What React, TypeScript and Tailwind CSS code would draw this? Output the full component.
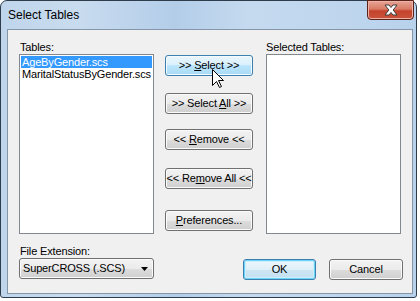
import React from "react";

const font = { fontFamily: '"Liberation Sans", Arial, sans-serif' };

type V = "normal" | "hover" | "default";

function Btn({
  children,
  v = "normal",
  className = "",
}: {
  children: React.ReactNode;
  v?: V;
  className?: string;
}) {
  const base =
    "flex items-center justify-center overflow-hidden whitespace-pre rounded-[3px] border text-[11px] leading-[13px] text-black";
  const style =
    v === "hover"
      ? "border-[#3c7fb1] bg-[linear-gradient(to_bottom,#eaf6fd_0%,#d9f0fc_50%,#bee6fd_50%,#a7d9f5_100%)] shadow-[inset_0_0_0_1px_#f4fbfe]"
      : v === "default"
      ? "border-[#3c7fb1] bg-[linear-gradient(to_bottom,#eef7fc_0%,#dfeff8_50%,#cfe6f4_50%,#c2dff1_100%)] shadow-[inset_0_0_0_1px_#6fd3f8,inset_0_0_0_2px_#c9eefc]"
      : "border-[#707070] bg-[linear-gradient(to_bottom,#f2f2f2_0%,#ebebeb_50%,#dddddd_50%,#cfcfcf_100%)] shadow-[inset_0_0_0_1px_#fbfbfb]";
  return (
    <div className={`${base} ${style} ${className}`}>
      <span className="shrink-0 whitespace-pre">{children}</span>
    </div>
  );
}

const U = ({ c }: { c: string }) => <span className="underline underline-offset-[1px]">{c}</span>;

export default function App() {
  return (
    <div className="relative h-[301px] w-[420px] overflow-hidden bg-white" style={font}>
      <div className="flex h-[298px] w-[417px] flex-col rounded-t-[7px] rounded-b-[3px] border border-[#2e3c4b] bg-[linear-gradient(90deg,#bfd5eb_0%,#c9dcef_18%,#b3cde9_42%,#c5daef_60%,#b9d2ec_100%)]">
        {/* title bar */}
        <div className="flex h-[28px] items-start justify-between">
          <div className="pl-[7px] pt-[7px] text-[12px] leading-[14px] text-black">Select Tables</div>
          <div className="mr-[2px] -mt-[1px] flex h-[20px] w-[47px] items-center justify-center rounded-b-[4px] border border-[#5b2219] bg-[linear-gradient(to_bottom,#e7a596_0%,#d97b66_45%,#c4432c_55%,#c9533b_100%)] shadow-[inset_0_0_0_1px_#eeb3a6]">
            <svg width="14" height="12" viewBox="0 0 14 12">
              <path
                d="M1 1 H5 L7 3.5 L9 1 H13 L9.2 6 L13 11 H9 L7 8.5 L5 11 H1 L4.8 6 Z"
                fill="#ffffff"
                stroke="#3d3d3d"
                strokeWidth="1"
                strokeLinejoin="round"
              />
            </svg>
          </div>
        </div>
        {/* client */}
        <div className="mb-[3px] ml-[6px] mr-[3px] flex flex-1 flex-col border border-[#8596a8] bg-[#f0f0f0] pl-[11px] pt-[11px] text-[11px] leading-[13px] tracking-[-0.15px] text-black">
          <div className="flex items-start">
            {/* left list */}
            <div className="flex w-[135px] flex-col">
              <div className="h-[13px] pl-[1px]">Tables:</div>
              <div className="h-[180px] border border-[#828790] bg-white p-[1px]">
                <div className="h-[12px] bg-[#3399ff] pl-[1px] leading-[12px] text-white">AgeByGender.scs</div>
                <div className="h-[13px] whitespace-nowrap pl-[1px] leading-[13px]">MaritalStatusByGender.scs</div>
              </div>
            </div>
            {/* buttons */}
            <div className="ml-[11px] flex w-[88px] flex-col">
              <Btn v="hover" className="mt-[14px] h-[21px]">
                {">> "}
                <U c="S" />
                {"elect >>"}
              </Btn>
              <Btn className="mt-[17px] h-[21px]">
                {">> Select "}
                <U c="A" />
                {"ll >>"}
              </Btn>
              <Btn className="mt-[15px] h-[21px]">
                {"<< "}
                <U c="R" />
                {"emove <<"}
              </Btn>
              <Btn className="mt-[18px] h-[21px]">
                {"<< Re"}
                <U c="m" />
                {"ove All <<"}
              </Btn>
              <Btn className="mt-[21px] h-[21px]">
                <U c="P" />
                {"references..."}
              </Btn>
            </div>
            {/* right list */}
            <div className="ml-[13px] flex w-[135px] flex-col">
              <div className="h-[13px]">Selected Tables:</div>
              <div className="h-[180px] border border-[#828790] bg-white" />
            </div>
          </div>
          {/* bottom row */}
          <div className="mt-[11px] flex items-start">
            <div className="flex w-[135px] flex-col">
              <div className="h-[13px] pl-[1px]">File Extension:</div>
              <div className="flex h-[21px] items-center justify-between rounded-[3px] border border-[#707070] bg-[linear-gradient(to_bottom,#f2f2f2_0%,#ebebeb_50%,#dddddd_50%,#cfcfcf_100%)] pl-[3px] pr-[5px] shadow-[inset_0_0_0_1px_#fbfbfb]">
                <span>SuperCROSS (.SCS)</span>
                <svg width="7" height="4" viewBox="0 0 7 4">
                  <path d="M0 0 H7 L3.5 4 Z" fill="#000" />
                </svg>
              </div>
            </div>
            <div className="ml-[89px] mt-[14px] flex gap-[13px]">
              <Btn v="default" className="h-[21px] w-[73px]">
                OK
              </Btn>
              <Btn className="h-[21px] w-[74px]">Cancel</Btn>
            </div>
          </div>
        </div>
      </div>
      {/* mouse cursor */}
      <svg className="absolute left-[212px] top-[69px]" width="13" height="20" viewBox="0 0 13 20">
        <path
          d="M0.5 0.5 V16.5 L4.5 12.5 L7.5 18.5 L9.5 17.5 L6.5 11.5 H11.5 Z"
          fill="#ffffff"
          stroke="#000000"
          strokeWidth="1"
          strokeLinejoin="miter"
        />
      </svg>
    </div>
  );
}
